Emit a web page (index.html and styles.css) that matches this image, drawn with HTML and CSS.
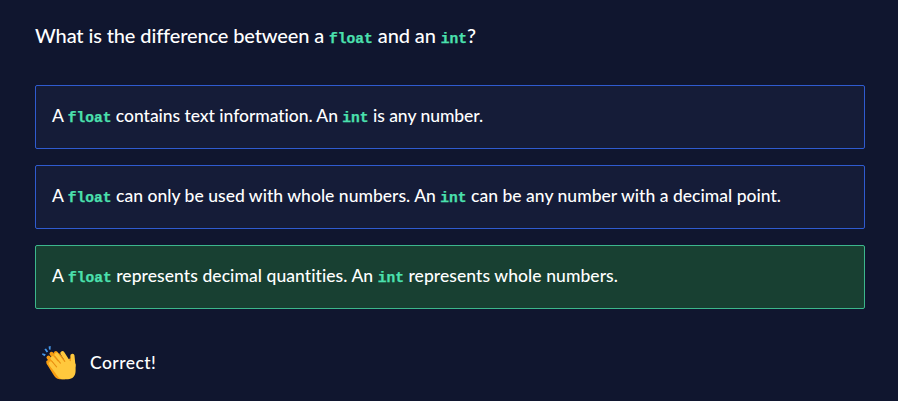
FILE: index.html
```html
<!DOCTYPE html>
<html lang="en">
<head>
<meta charset="utf-8">
<title>Quiz</title>
<link rel="stylesheet" href="styles.css">
</head>
<body>
<main class="quiz">
  <h1 class="question">What is the difference between a <code>float</code> and an <code>int</code>?</h1>
  <ul class="answers">
    <li class="answer answer-text"><p>A <code>float</code> contains text information. An <code>int</code> is any number.</p></li>
    <li class="answer answer-whole"><p>A <code>float</code> can only be used with whole numbers. An <code>int</code> can be any number with a decimal point.</p></li>
    <li class="answer answer-correct"><p>A <code>float</code> represents decimal quantities. An <code>int</code> represents whole numbers.</p></li>
  </ul>
  <div class="feedback">
    <svg class="clap" viewBox="0 0 36 36" aria-hidden="true">
      <g fill="#4596e8"><path d="M1.5 8.2 4.8 9.3 3.6 11.3 1 9.4zM3.4 4.2 5 3.6 7.2 6.6 5.6 7.4zM7.6 1.5 9.7 1.1 9.5 4.7 8 4.5z"/></g>
      <g fill="#f79d12" stroke="#f79d12" stroke-width="4" stroke-linecap="round">
        <path d="M7.2 17 15 27M7.5 12.5 17 24M10.5 8.8 18 18M14.8 8 20 14"/>
        <path stroke="none" d="M5.3 18.2 12.3 29.5C13.8 32 15.5 34 18.5 34.2H24L20 18z"/>
      </g>
      <g fill="#ffc83d" stroke="#ffc83d" stroke-width="4.2" stroke-linecap="round">
        <path d="M9.8 18.5 17 27M11.5 13.3 20 24M15.6 9.8 24 20M21.4 8.2 27 17M31.4 10.8 32.4 21"/>
        <path stroke="none" d="M8.3 20 14.5 28.2C16.5 31.5 18.5 34.2 22 34.3H27C31.5 34.1 34.5 31 34.6 26V19L30 13.5 27.5 14.5 20 15z"/>
      </g>
      <path fill="none" stroke="#e88e12" stroke-width="1.1" stroke-linecap="round" d="M10.7 16 15.6 21.8M13.8 11.4 19.4 18.2M18.5 9.2 23.8 16.4M29.2 13V15.6"/>
    </svg>
    <p class="feedback-text">Correct!</p>
  </div>
</main>
</body>
</html>
```
FILE: styles.css
```css
* { box-sizing: border-box; }
body {
  margin: 0;
  min-height: 401px;
  background: #10162f;
  color: #fff;
  font: 500 17.5px/24px Lato, sans-serif;
  font-variant-ligatures: none;
}
.quiz { padding: 20px 33px 0 35px; }
h1, p, ul { margin: 0; padding: 0; }
.question { font-size: 20px; font-weight: 500; line-height: 30px; letter-spacing: -0.12px; }
code {
  font: bold 14.6px/1 "Liberation Mono", monospace;
  letter-spacing: 0;
  color: #4be0ae;
  -webkit-text-stroke: 0.25px #4be0ae;
}
.answers { list-style: none; display: grid; gap: 16px; margin-top: 35px; }
.answer {
  height: 64px;
  display: flex;
  align-items: center;
  padding: 0 16px 2px;
  border: 1px solid #2f5bd0;
  border-radius: 2px;
  background: #151c38;
}
.answer-text { letter-spacing: -0.04px; }
.answer-whole { letter-spacing: 0.025px; }
.answer-correct { background: #184032; border-color: #3cb78c; letter-spacing: 0.07px; }
.feedback { display: flex; align-items: center; gap: 13px; margin: 36px 0 0 6px; }
.feedback-text { letter-spacing: 0.45px; }
.clap { width: 36px; height: 36px; }
```
